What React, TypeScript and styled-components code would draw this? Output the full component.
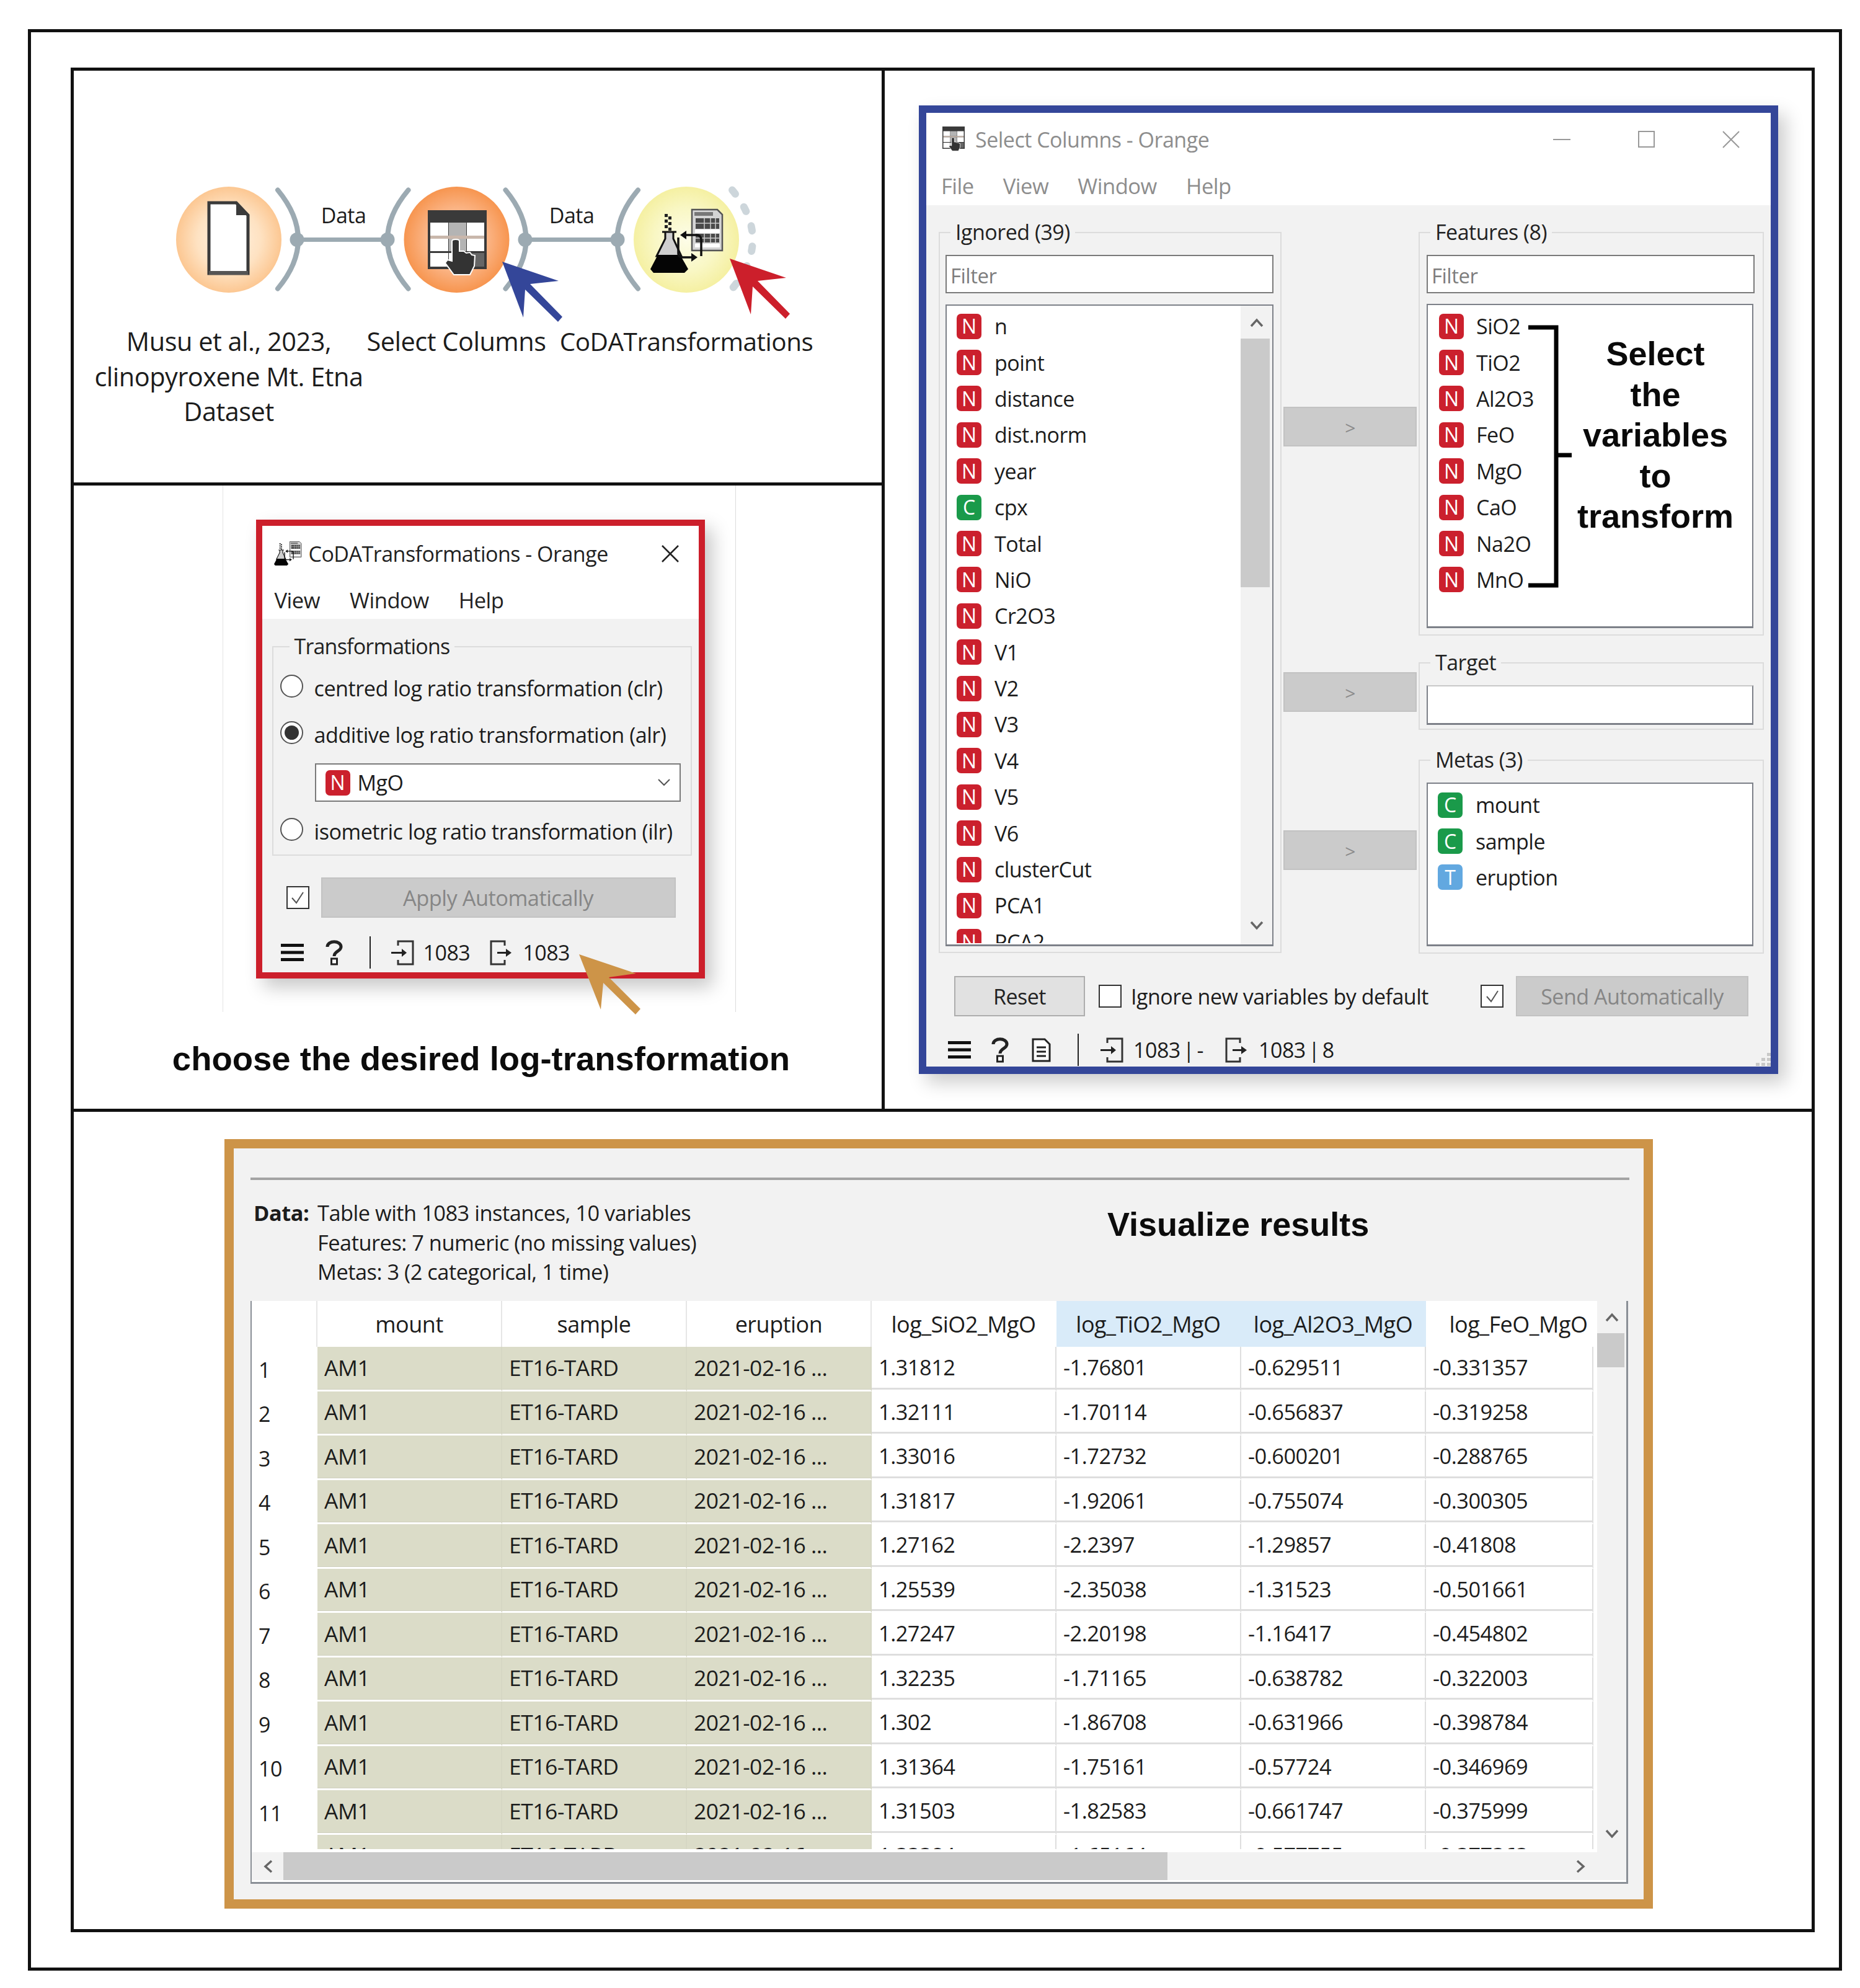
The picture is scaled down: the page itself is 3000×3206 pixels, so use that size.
import React from 'react';
import styled, { createGlobalStyle } from 'styled-components';

const UI = `"Open Sans", "Noto Sans", sans-serif`;
const BOLD = `"Liberation Sans", Arial, sans-serif`;

const Global = createGlobalStyle`
  html, body { margin: 0; padding: 0; background: #fff; }
  * { box-sizing: border-box; }
`;

const Page = styled.div`
  width: 3000px; height: 3206px; padding: 47px 0 0 45px; font-family: ${UI}; color: #1c1c1c;
  font-size: 34px; letter-spacing: -0.5px; position: relative;
`;
const OuterFrame = styled.div`
  width: 2926px; height: 3131px; border: 5px solid #111; padding: 57px 0 0 64px;
`;
const InnerFrame = styled.div`
  width: 2813px; height: 3007px; border: 5px solid #111;
  display: grid; grid-template-columns: 1308px 1495px; grid-template-rows: 1679px 1fr;
`;
const LeftColumn = styled.div`
  display: grid; grid-template-rows: 669px 1fr; border-right: 5px solid #111; border-bottom: 5px solid #111;
`;
const CanvasCell = styled.div`
  position: relative; border-bottom: 5px solid #111; overflow: hidden;
`;
const CanvasSvg = styled.svg`
  position: absolute; left: -1px; top: 0; width: 1304px; height: 664px;
`;
const NodeText = styled.div<{ $x: number; $y: number; $size?: number }>`
  position: absolute; left: ${p => p.$x}px; top: ${p => p.$y}px; transform: translate(-50%, -50%);
  white-space: nowrap; font-size: ${p => p.$size ?? 41.5}px; line-height: 57px; text-align: center;
  color: #1c1c1c;
`;

/* ---------- CoDA cell ---------- */
const CodaCell = styled.div`
  display: flex; flex-direction: column; align-items: center; padding-left: 4px;
`;
const ShotFrame = styled.div`
  width: 828px; height: 849px; padding: 55px 0 0 53px;
  border-left: 1px solid #e4e4e4; border-right: 1px solid #dcdcdc;
`;
const CodaWindow = styled.div`
  width: 724px; height: 740px; border: 10.5px solid #cc1f2b; background: #f2f2f2;
  box-shadow: 12px 14px 28px rgba(0,0,0,.22); display: flex; flex-direction: column;
`;
const Caption = styled.div`
  margin: 46px 0 0 7px; font: bold 54.5px/60px ${BOLD}; color: #0c0c0c; letter-spacing: 0;
`;

const TitleBar = styled.div<{ $h: number; $pad: number; $muted?: boolean }>`
  height: ${p => p.$h}px; background: #fff; display: flex; align-items: center;
  padding: 0 ${p => p.$pad}px 3px; gap: 12px; color: ${p => (p.$muted ? '#8d8d8d' : '#222')};
  font-size: 34px; flex: none;
`;
const MenuBar = styled.div<{ $h: number; $pad: number; $gap: number; $muted?: boolean }>`
  height: ${p => p.$h}px; background: #fff; display: flex; align-items: center;
  padding: 0 ${p => p.$pad}px 3px; gap: ${p => p.$gap}px; color: ${p => (p.$muted ? '#8d8d8d' : '#222')};
  font-size: 34.6px; flex: none;
`;
const WinButtons = styled.div<{ $gap: number; $right: number }>`
  margin-left: auto; display: flex; align-items: center; gap: ${p => p.$gap}px; padding-right: ${p => p.$right}px;
`;
const Group = styled.fieldset<{ $h: number; $pad?: number; $top?: number }>`
  margin: ${p => p.$top ?? 0}px 0 0; padding: 0 11px 9px ${p => p.$pad ?? 11}px; border: 2px solid #dcdcdc; min-width: 0;
  height: ${p => p.$h}px;
`;
const GroupLabel = styled.legend<{ $inset: number }>`
  margin-left: ${p => p.$inset}px; padding: 0 8px 2px; line-height: 42px; font-size: 34px; color: #222;
`;
const CodaLabel = styled(GroupLabel)`
  letter-spacing: -0.8px;
`;
const CodaBody = styled.div`
  flex: 1; padding: 23px 11px 0 16px; display: flex; flex-direction: column; min-height: 0;
`;
const RadioRow = styled.div<{ $top: number }>`
  height: 48px; margin-top: ${p => p.$top}px; display: flex; align-items: center; gap: 18px;
  white-space: nowrap; font-size: 34.2px;
`;
const Radio = styled.span<{ $on?: boolean }>`
  width: 37px; height: 37px; flex: none; border-radius: 50%; border: 2px solid #555; background: #fff;
  display: flex; align-items: center; justify-content: center; margin-top: -6px;
  &::after { content: ''; width: 23px; height: 23px; border-radius: 50%; background: ${p => (p.$on ? '#333' : 'transparent')}; }
`;
const ComboBox = styled.div`
  width: 590px; height: 62px; margin: 23px 0 0 56px; border: 2px solid #7a7a7a; background: #fff;
  display: flex; align-items: center; padding: 0 15px 0 15px; gap: 12px;
`;
const ComboArrow = styled.span`
  margin-left: auto; display: flex;
`;
const Badge = styled.span<{ $kind: 'N' | 'C' | 'T' }>`
  width: 40px; height: 41px; flex: none; border-radius: 7px; color: #fff; font-size: 32px; letter-spacing: 0;
  display: flex; align-items: center; justify-content: center; line-height: 1;
  background: ${p => ({ N: '#cb202d', C: '#1a9a4a', T: '#62a8e0' }[p.$kind])};
`;
const ApplyRow = styled.div`
  display: flex; align-items: center; gap: 19px; padding-left: 23px; margin-top: 35px; font-size: 34.4px;
`;
const Check = styled.span`
  width: 37px; height: 37px; flex: none; background: #fff; border: 2px solid #333;
  display: flex; align-items: center; justify-content: center;
`;
const FlatButton = styled.div<{ $w: number; $disabled?: boolean }>`
  width: ${p => p.$w}px; height: 65px; flex: none; display: flex; align-items: center; justify-content: center;
  background: ${p => (p.$disabled ? '#cbcbcb' : '#e1e1e1')}; color: ${p => (p.$disabled ? '#868686' : '#222')};
  border: 2px solid ${p => (p.$disabled ? '#c2c2c2' : '#adadad')};
`;
const StatusBar = styled.div<{ $top: number; $left: number }>`
  height: 52px; margin-top: ${p => p.$top}px; padding-left: ${p => p.$left}px;
  display: flex; align-items: center; flex: none; position: relative;
`;
const StatusCount = styled.span<{ $l: number }>`
  margin-left: ${p => p.$l}px; white-space: pre; word-spacing: -4px;
`;
const Separator = styled.span<{ $l: number }>`
  margin-left: ${p => p.$l}px; width: 2px; height: 52px; background: #222;
`;
const IconSlot = styled.svg<{ $l: number }>`
  margin-left: ${p => p.$l}px; flex: none; overflow: visible;
`;

/* ---------- Select Columns ---------- */
const SelectCell = styled.div`
  padding: 56px 0 0 55px; border-bottom: 5px solid #111;
`;
const SelectWindow = styled.div`
  width: 1386px; height: 1562px; border: 12px solid #344699; background: #f2f2f2;
  box-shadow: 12px 14px 28px rgba(0,0,0,.2); display: flex; flex-direction: column; position: relative;
`;
const SelectBody = styled.div`
  padding: 22px 11px 0 20px; display: grid; grid-template-columns: 553px 221px 557px; flex: none;
`;
const MoveColumn = styled.div`
  padding: 0 3px; display: flex; flex-direction: column;
`;
const MoveButton = styled.div<{ $top: number }>`
  height: 64px; margin-top: ${p => p.$top}px; background: #cbcbcb; border: 2px solid #c2c2c2; color: #8a8a8a;
  display: flex; align-items: center; justify-content: center; font-size: 30px; padding-top: 2px;
`;
const RightColumn = styled.div`
  display: flex; flex-direction: column;
`;
const FilterInput = styled.input<{ $w: number }>`
  display: block; width: ${p => p.$w}px; height: 62px; border: 2px solid #7a7a7a; background: #fff;
  padding: 4px 6px 0; margin: 14px 0 0; font: 33px ${UI}; letter-spacing: -0.5px; outline: none;
  &::placeholder { color: #7d7d7d; opacity: 1; }
`;
const VarList = styled.div<{ $h: number; $w: number; $top: number }>`
  width: ${p => p.$w}px; height: ${p => p.$h}px; margin-top: ${p => p.$top}px; background: #fff;
  border: 2px solid #7c8088; border-bottom-width: 3px; display: flex; position: relative; overflow: hidden; flex: none;
`;
const TargetBox = styled(VarList)`
  border-top-color: #c8c8c8;
`;
const VarRows = styled.div<{ $h?: number; $pad?: number; $top?: number }>`
  flex: 1; padding: ${p => p.$top ?? 4}px 0 0 ${p => p.$pad ?? 16}px; min-width: 0;
  ${p => (p.$h ? `height: ${p.$h}px; overflow: hidden;` : '')}
`;
const VarRow = styled.div<{ $gap?: number }>`
  height: 58.4px; display: flex; align-items: center; gap: ${p => p.$gap ?? 21}px; white-space: nowrap;
`;
const VScroll = styled.div<{ $w: number }>`
  width: ${p => p.$w}px; flex: none; background: #f2f2f2; display: flex; flex-direction: column;
`;
const ScrollArrow = styled.div<{ $h: number; $end?: number }>`
  height: ${p => p.$h}px; flex: none; display: flex; justify-content: center;
  align-items: ${p => (p.$end ? 'flex-end' : 'center')}; padding-bottom: ${p => p.$end ?? 0}px;
`;
const ScrollThumb = styled.div<{ $h: number; $w?: number }>`
  height: ${p => p.$h}px; width: ${p => (p.$w ? `${p.$w}px` : '100%')}; background: #cacaca; flex: none;
`;
const Bracket = styled.svg`
  position: absolute; left: 158px; top: 30px; width: 80px; height: 430px;
`;
const BracketNote = styled.div`
  position: absolute; left: 215px; top: 46px; width: 304px; text-align: center;
  font: bold 54px/65.5px ${BOLD}; color: #0a0a0a; letter-spacing: 0;
`;
const FooterRow = styled.div`
  margin-top: 36px; padding: 0 36px 0 45px; display: flex; align-items: center; flex: none;
`;
const IgnoreCheck = styled(Check)`
  margin-left: 22px;
`;
const IgnoreText = styled.span`
  margin-left: 15px; white-space: nowrap;
`;
const SendGroup = styled.div`
  margin-left: auto; display: flex; align-items: center; gap: 20px;
`;
const Grip = styled.svg`
  position: absolute; right: 0; bottom: 0; width: 26px; height: 24px;
`;

/* ---------- Table panel ---------- */
const TableCell = styled.div`
  grid-column: 1 / 3; padding: 44px 0 0 243px;
`;
const TablePanel = styled.div`
  width: 2304px; height: 1241px; border: 15px solid #cd9448; background: #f2f2f2;
`;
const Rule = styled.div`
  height: 4px; margin: 47px 23px 0 27px; background: #a3a3a3;
`;
const InfoRow = styled.div`
  display: flex; padding: 29px 0 0 32px; height: 195px; line-height: 47.5px; position: relative; font-size: 34.4px;
`;
const InfoKey = styled.div`
  width: 103px; font-weight: 700; flex: none;
`;
const InfoTitle = styled.div`
  position: absolute; left: 1409px; top: 41px; font: bold 54px/60px ${BOLD}; color: #0c0c0c; letter-spacing: 0; white-space: nowrap;
`;
const TableFrame = styled.div`
  margin-left: 27px; width: 2222px; height: 940px; border: 0 solid #8a8f96; border-width: 0 3px 3px 2px;
  display: flex; flex-direction: column; background: #fff;
`;
const TableTop = styled.div`
  display: flex; height: 889px; flex: none;
`;
const GridWrap = styled.div`
  width: 2170px; flex: none; padding-right: 6px; height: 889px;
`;
const GridClip = styled.div`
  height: 884px; overflow: hidden;
`;
const GridRow = styled.div<{ $h: number }>`
  display: grid; grid-template-columns: 106px repeat(6, 298px) 270px; height: ${p => p.$h}px;
`;
const HeadCell = styled.div<{ $sel?: boolean; $line?: boolean; $shift?: number }>`
  display: flex; align-items: center; justify-content: center; white-space: nowrap; font-size: 36px;
  padding-left: ${p => p.$shift ?? 0}px;
  background: ${p => (p.$sel ? '#d9ebf9' : '#fff')};
  border-right: 2px solid ${p => (p.$line ? '#e6e6e6' : 'transparent')};
`;
const IndexCell = styled.div`
  display: flex; align-items: center; padding: 2px 0 0 11px; background: #fff;
`;
const DataCell = styled.div<{ $meta?: boolean }>`
  display: flex; align-items: center; padding: 0 0 3px 11px; white-space: nowrap; overflow: hidden;
  font-size: ${p => (p.$meta ? 35.5 : 34.4)}px;
  background: ${p => (p.$meta ? '#dbdcc8' : '#fff')};
  border-right: 2px solid ${p => (p.$meta ? '#d6d7c4' : '#dedede')};
  border-bottom: 3.5px solid #fff;
  box-shadow: inset 0 -${p => (p.$meta ? 1 : 3)}px 0 ${p => (p.$meta ? '#cfd0be' : '#dedede')};
`;
const HScroll = styled.div`
  height: 45px; background: #f2f2f2; display: flex; flex: none;
`;
const HArrow = styled.div<{ $w: number; $auto?: boolean }>`
  width: ${p => p.$w}px; flex: none; display: flex; align-items: center; justify-content: center;
  ${p => (p.$auto ? 'margin-left: auto;' : '')}
`;
const GoldLayer = styled.svg`
  position: absolute; left: 934px; top: 1539px; width: 100px; height: 98px; overflow: visible;
`;

/* ---------- Drawings ---------- */
const TableIcon = ({ size, x, y }: { size: number; x?: number; y?: number }) => (
  <svg x={x} y={y} width={size} height={size * 110 / 95} viewBox="0 0 95 110" style={{ overflow: 'visible', flex: 'none' }}>
    <rect width="95" height="95" fill="#3a3a3a" />
    <rect x="4" y="20" width="29" height="21" fill="#fff" />
    <rect x="34" y="20" width="28" height="21" fill="#b4b4b4" />
    <rect x="63" y="20" width="28" height="21" fill="#fff" />
    <rect x="4" y="41" width="87" height="5" fill="#c9b7ab" />
    <rect x="4" y="46" width="29" height="20" fill="#fff" />
    <rect x="34" y="46" width="28" height="20" fill="#b4b4b4" />
    <rect x="63" y="46" width="28" height="20" fill="#fff" />
    <rect x="4" y="69" width="29" height="22" fill="#fff" />
    <rect x="34" y="69" width="28" height="22" fill="#fff" />
    <rect x="63" y="69" width="28" height="22" fill="#666" />
    <path d="M39 50 Q39 47 45 47 Q51 47 51 50 V66 L58 66 L62 69 L68 68 L71 72 L76 73 L75 90 L68 104 H42 L28 85 L32 80 L39 82 Z" fill="#333" stroke="#fff" strokeWidth="2" />
  </svg>
);
const FlaskIcon = ({ size, x, y }: { size: number; x?: number; y?: number }) => (
  <svg x={x} y={y} width={size} height={size * 103 / 116} viewBox="0 0 116 103" style={{ overflow: 'visible', flex: 'none' }}>
    <g fill="#222">
      <rect x="23" y="8" width="5" height="5" /><rect x="29" y="12" width="5" height="5" />
      <rect x="23" y="17" width="5" height="5" /><rect x="29" y="21" width="5" height="5" />
      <rect x="23" y="26" width="5" height="5" /><rect x="29" y="30" width="5" height="5" />
    </g>
    <path d="M19 37 H42 M24 37 V48 L10 76 H50 L37 48 V37" fill="#cfcfcf" stroke="#111" strokeWidth="3" />
    <path d="M12 74 H48 L61 97 L55 103 H5 L0 97 Z" fill="#050505" />
    <path d="M67 1 H108 L116 9 V67 H67 Z" fill="#d4d4d4" stroke="#555" strokeWidth="2.5" />
    <rect x="71" y="5" width="30" height="6" fill="#777" />
    <rect x="73" y="15" width="38" height="17" fill="#4a4a4a" />
    <rect x="73" y="40" width="38" height="14" fill="#4a4a4a" />
    <g stroke="#ccc" strokeWidth="1.5">
      <path d="M73 23 H111 M73 47 H111" />
      <path d="M87 15 V32 M97 15 V32 M105 15 V32 M87 40 V54 M97 40 V54 M105 40 V54" />
    </g>
    <rect x="72" y="33" width="40" height="6" fill="#fff" />
    <rect x="72" y="56" width="40" height="6" fill="#fff" />
    <path d="M82 76 V50 Q82 42 74 42 H56" fill="none" stroke="#111" strokeWidth="3.5" />
    <path d="M48 42 L58 35 V49 Z" fill="#111" />
    <path d="M45 46 V72 Q45 78 52 78 H68" fill="none" stroke="#111" strokeWidth="3.5" />
    <path d="M76 78 L66 71 V85 Z" fill="#111" />
  </svg>
);

const ArrowHead = ({ points, fill }: { points: [number, number][]; fill: string }) => (
  <polygon points={points.map(([a, b]) => `${a - 118},${b - 114}`).join(' ')} fill={fill} />
);

const Connector = ({ cx }: { cx: number }) => {
  const x = cx - 118;
  const y = 386.5 - 114;
  return <path d={`M${x + 79} ${y - 80} Q${x + 145} ${y} ${x + 79} ${y + 79}`} fill="none" stroke="#9caab2" strokeWidth="8" strokeLinecap="round" />;
};
const InputArc = ({ cx }: { cx: number }) => {
  const x = cx - 118;
  const y = 386.5 - 114;
  return <path d={`M${x - 78} ${y - 80} Q${x - 145} ${y} ${x - 78} ${y + 79}`} fill="none" stroke="#9caab2" strokeWidth="8" strokeLinecap="round" />;
};
const Link = ({ x1, x2 }: { x1: number; x2: number }) => {
  const y = 386.5 - 114;
  return (
    <g fill="#9caab2">
      <rect x={x1 - 118} y={y - 3.5} width={x2 - x1} height="7" />
      <circle cx={x1 - 118} cy={y} r="11.5" />
      <circle cx={x2 - 118} cy={y} r="11.5" />
    </g>
  );
};

const Chevron = ({ dir }: { dir: 'up' | 'down' | 'left' | 'right' }) => {
  const rot = { up: 0, down: 180, left: -90, right: 90 }[dir];
  return (
    <svg width="22" height="16" viewBox="0 0 22 16" style={{ transform: `rotate(${rot}deg)` }}>
      <polyline points="2,14 11,4 20,14" fill="none" stroke="#666" strokeWidth="3.5" />
    </svg>
  );
};
const CheckMark = () => (
  <svg width="24" height="22" viewBox="0 0 24 22"><polyline points="3,11 10,19 21,2" fill="none" stroke="#555" strokeWidth="2" /></svg>
);
const Hamburger = ({ l }: { l: number }) => (
  <IconSlot $l={l} width="37" height="28" viewBox="0 0 37 28"><path d="M0 2.5 H37 M0 14 H37 M0 25.5 H37" stroke="#111" strokeWidth="5" /></IconSlot>
);
const Help = ({ l }: { l: number }) => (
  <IconSlot $l={l} width="28" height="40" viewBox="0 0 28 40">
    <path d="M3 11 C3 0 25 0 25 11 C25 18 14 18 14 26" fill="none" stroke="#222" strokeWidth="5" />
    <rect x="9.5" y="30" width="9" height="9" fill="#fff" stroke="#222" strokeWidth="3" />
  </IconSlot>
);
const DocIcon = ({ l }: { l: number }) => (
  <IconSlot $l={l} width="31" height="39" viewBox="0 0 31 39">
    <path d="M2 2 H21 L29 10 V37 H2 Z" fill="#fff" stroke="#222" strokeWidth="3" />
    <path d="M8 15 H23 M8 22 H23 M8 29 H23" stroke="#222" strokeWidth="3" />
  </IconSlot>
);
const InIcon = ({ l }: { l: number }) => (
  <IconSlot $l={l} width="37" height="41" viewBox="0 0 37 41">
    <path d="M11 9 V2 H35 V39 H11 V32" fill="none" stroke="#333" strokeWidth="3" />
    <path d="M0 20.5 H20" stroke="#222" strokeWidth="3" />
    <path d="M25 20.5 L17 14 V27 Z" fill="#222" />
  </IconSlot>
);
const OutIcon = ({ l }: { l: number }) => (
  <IconSlot $l={l} width="35" height="41" viewBox="0 0 35 41">
    <path d="M24 9 V2 H2 V39 H24 V32" fill="none" stroke="#333" strokeWidth="3" />
    <path d="M12 20.5 H28" stroke="#222" strokeWidth="3" />
    <path d="M35 20.5 L26 14 V27 Z" fill="#222" />
  </IconSlot>
);
const CloseIcon = ({ color, size, w }: { color: string; size: number; w: number }) => (
  <svg width={size} height={size} viewBox="0 0 28 28"><path d="M1 1 L27 27 M27 1 L1 27" stroke={color} strokeWidth={w} /></svg>
);

const ignored: [string, 'N' | 'C'][] = [
  ['n', 'N'], ['point', 'N'], ['distance', 'N'], ['dist.norm', 'N'], ['year', 'N'], ['cpx', 'C'], ['Total', 'N'], ['NiO', 'N'],
  ['Cr2O3', 'N'], ['V1', 'N'], ['V2', 'N'], ['V3', 'N'], ['V4', 'N'], ['V5', 'N'], ['V6', 'N'], ['clusterCut', 'N'], ['PCA1', 'N'], ['PCA2', 'N'],
];
const features = ['SiO2', 'TiO2', 'Al2O3', 'FeO', 'MgO', 'CaO', 'Na2O', 'MnO'];
const metas: [string, 'C' | 'T'][] = [['mount', 'C'], ['sample', 'C'], ['eruption', 'T']];
const headers = ['mount', 'sample', 'eruption', 'log_SiO2_MgO', 'log_TiO2_MgO', 'log_Al2O3_MgO', 'log_FeO_MgO'];
const rows = [
  ['1.31812', '-1.76801', '-0.629511', '-0.331357'],
  ['1.32111', '-1.70114', '-0.656837', '-0.319258'],
  ['1.33016', '-1.72732', '-0.600201', '-0.288765'],
  ['1.31817', '-1.92061', '-0.755074', '-0.300305'],
  ['1.27162', '-2.2397', '-1.29857', '-0.41808'],
  ['1.25539', '-2.35038', '-1.31523', '-0.501661'],
  ['1.27247', '-2.20198', '-1.16417', '-0.454802'],
  ['1.32235', '-1.71165', '-0.638782', '-0.322003'],
  ['1.302', '-1.86708', '-0.631966', '-0.398784'],
  ['1.31364', '-1.75161', '-0.57724', '-0.346969'],
  ['1.31503', '-1.82583', '-0.661747', '-0.375999'],
  ['1.33384', '-1.65164', '-0.577755', '-0.377363'],
];

export default function App() {
  return (
    <Page>
      <Global />
      <OuterFrame>
        <InnerFrame>
          <LeftColumn>
            <CanvasCell>
              <CanvasSvg viewBox="0 0 1304 664">
                <defs>
                  <radialGradient id="g1"><stop offset="0" stopColor="#fff3e4" /><stop offset="0.6" stopColor="#fee2c2" /><stop offset="1" stopColor="#fcc792" /></radialGradient>
                  <radialGradient id="g2"><stop offset="0" stopColor="#fcc9a2" /><stop offset="0.55" stopColor="#fbb78a" /><stop offset="1" stopColor="#f7954f" /></radialGradient>
                  <radialGradient id="g3"><stop offset="0" stopColor="#fdfde8" /><stop offset="0.6" stopColor="#f9f7c4" /><stop offset="1" stopColor="#f5f0a2" /></radialGradient>
                </defs>
                <Connector cx={369} />
                <Link x1={479} x2={625} />
                <InputArc cx={736.5} />
                <Connector cx={736.5} />
                <Link x1={847} x2={996} />
                <InputArc cx={1107} />
                <path d="M1063 192.5 Q1129 272 1063 351.5" fill="none" stroke="#cdd6db" strokeWidth="12" strokeLinecap="round" strokeDasharray="8 25" />
                <ellipse cx={251} cy={272.5} rx="85" ry="85.5" fill="url(#g1)" />
                <ellipse cx={618.5} cy={272.5} rx="85" ry="85.5" fill="url(#g2)" />
                <ellipse cx={989} cy={272.5} rx="85" ry="85.5" fill="url(#g3)" />
                <path d="M219 213 H263 L282 233 V327 H219 Z" fill="#fff" stroke="#3a3a3a" strokeWidth="5" />
                <path d="M263 213 V233 H282 Z" fill="#3a3a3a" />
                <rect x="219" y="323" width="63" height="6" fill="#555" />
                <TableIcon size={95} x={572} y={225} />
                <FlaskIcon size={116} x={931} y={223} />
                <ArrowHead fill="#344699" points={[[810, 422], [901, 453], [855, 458], [907, 511], [900, 519], [847, 467], [844, 512]]} />
                <ArrowHead fill="#cc1f2b" points={[[1177, 417], [1268, 448], [1222, 453], [1274, 506], [1267, 514], [1214, 462], [1211, 507]]} />
              </CanvasSvg>
              <NodeText $x={435} $y={233} $size={34}>Data</NodeText>
              <NodeText $x={803} $y={233} $size={34}>Data</NodeText>
              <NodeText $x={250} $y={436}>Musu et al., 2023,</NodeText>
              <NodeText $x={250} $y={493}>clinopyroxene Mt. Etna</NodeText>
              <NodeText $x={250} $y={549}>Dataset</NodeText>
              <NodeText $x={617} $y={436}>Select Columns</NodeText>
              <NodeText $x={988} $y={436} $size={40.5}>CoDATransformations</NodeText>
            </CanvasCell>
            <CodaCell>
              <ShotFrame>
                <CodaWindow>
                  <TitleBar $h={92} $pad={19}>
                    <FlaskIcon size={44} />
                    <span>CoDATransformations - Orange</span>
                    <WinButtons $gap={0} $right={13}><CloseIcon color="#222" size={28} w={2.5} /></WinButtons>
                  </TitleBar>
                  <MenuBar $h={58} $pad={20} $gap={48}>
                    <span>View</span><span>Window</span><span>Help</span>
                  </MenuBar>
                  <CodaBody>
                    <Group $h={359}>
                      <CodaLabel $inset={15}>Transformations</CodaLabel>
                      <RadioRow $top={20}><Radio /><span>centred log ratio transformation (clr)</span></RadioRow>
                      <RadioRow $top={27}><Radio $on /><span>additive log ratio transformation (alr)</span></RadioRow>
                      <ComboBox>
                        <Badge $kind="N">N</Badge><span>MgO</span>
                        <ComboArrow><svg width="20" height="12" viewBox="0 0 20 12"><polyline points="1,1 10,10 19,1" fill="none" stroke="#555" strokeWidth="2" /></svg></ComboArrow>
                      </ComboBox>
                      <RadioRow $top={23}><Radio /><span>isometric log ratio transformation (ilr)</span></RadioRow>
                    </Group>
                    <ApplyRow>
                      <Check><CheckMark /></Check>
                      <FlatButton $w={572} $disabled>Apply Automatically</FlatButton>
                    </ApplyRow>
                    <StatusBar $top={30} $left={14}>
                      <Hamburger l={0} /><Help l={35} /><Separator $l={43} /><InIcon l={33} />
                      <StatusCount $l={15}>1083</StatusCount><OutIcon l={32} /><StatusCount $l={18}>1083</StatusCount>
                    </StatusBar>
                  </CodaBody>
                </CodaWindow>
              </ShotFrame>
              <Caption>choose the desired log-transformation</Caption>
            </CodaCell>
          </LeftColumn>

          <SelectCell>
            <SelectWindow>
              <TitleBar $h={88} $pad={26} $muted>
                <TableIcon size={36} />
                <span style={{ marginLeft: 5 }}>Select Columns - Orange</span>
                <WinButtons $gap={109} $right={24}>
                  <svg width="28" height="2" viewBox="0 0 28 2"><rect width="28" height="2" fill="#999" /></svg>
                  <svg width="27" height="27" viewBox="0 0 27 27"><rect x="1" y="1" width="25" height="25" fill="none" stroke="#999" strokeWidth="2" /></svg>
                  <CloseIcon color="#999" size={28} w={2} />
                </WinButtons>
              </TitleBar>
              <MenuBar $h={61} $pad={24} $gap={47} $muted>
                <span>File</span><span>View</span><span>Window</span><span>Help</span>
              </MenuBar>
              <SelectBody>
                <Group $h={1184} $pad={9}>
                  <GroupLabel $inset={8}>Ignored (39)</GroupLabel>
                  <FilterInput $w={529} placeholder="Filter" readOnly />
                  <VarList $w={529} $h={1035} $top={18}>
                    <VarRows $h={1028}>
                      {ignored.map(([t, k]) => (
                        <VarRow key={t}><Badge $kind={k}>{k}</Badge><span>{t}</span></VarRow>
                      ))}
                    </VarRows>
                    <VScroll $w={51}>
                      <ScrollArrow $h={53}><Chevron dir="up" /></ScrollArrow>
                      <ScrollThumb $h={401} $w={47} />
                      <ScrollArrow $h={574} $end={20}><Chevron dir="down" /></ScrollArrow>
                    </VScroll>
                  </VarList>
                </Group>
                <MoveColumn>
                  <MoveButton $top={303}>&gt;</MoveButton>
                  <MoveButton $top={364}>&gt;</MoveButton>
                  <MoveButton $top={191}>&gt;</MoveButton>
                </MoveColumn>
                <RightColumn>
                  <Group $h={672}>
                    <GroupLabel $inset={6}>Features (8)</GroupLabel>
                    <FilterInput $w={529} placeholder="Filter" readOnly />
                    <VarList $w={527} $h={523} $top={17}>
                      <VarRows $pad={18} $top={5}>
                        {features.map(t => (
                          <VarRow key={t} $gap={20}><Badge $kind="N">N</Badge><span>{t}</span></VarRow>
                        ))}
                      </VarRows>
                      <Bracket viewBox="0 0 80 430">
                        <path d="M4 6 H49 V422 H4 M49 212 H74" fill="none" stroke="#000" strokeWidth="7" />
                      </Bracket>
                      <BracketNote>Select<br />the<br />variables<br />to<br />transform</BracketNote>
                    </VarList>
                  </Group>
                  <Group $h={130} $top={22}>
                    <GroupLabel $inset={6}>Target</GroupLabel>
                    <TargetBox $w={527} $h={64} $top={14} />
                  </Group>
                  <Group $h={334} $top={27}>
                    <GroupLabel $inset={6}>Metas (3)</GroupLabel>
                    <VarList $w={527} $h={264} $top={14}>
                      <VarRows $top={5}>
                        {metas.map(([t, k]) => (
                          <VarRow key={t}><Badge $kind={k}>{k}</Badge><span>{t}</span></VarRow>
                        ))}
                      </VarRows>
                    </VarList>
                  </Group>
                </RightColumn>
              </SelectBody>
              <FooterRow>
                <FlatButton $w={211}>Reset</FlatButton>
                <IgnoreCheck />
                <IgnoreText>Ignore new variables by default</IgnoreText>
                <SendGroup>
                  <Check><CheckMark /></Check>
                  <FlatButton $w={375} $disabled>Send Automatically</FlatButton>
                </SendGroup>
              </FooterRow>
              <StatusBar $top={28} $left={35}>
                <Hamburger l={0} /><Help l={33} /><DocIcon l={37} /><Separator $l={43} /><InIcon l={35} />
                <StatusCount $l={16}>1083 | -</StatusCount><OutIcon l={35} /><StatusCount $l={19}>1083 | 8</StatusCount>
              </StatusBar>
              <Grip viewBox="0 0 26 24">
                <g fill="#c8c8c8">
                  <rect x="20" y="2" width="6" height="5" /><rect x="11" y="10" width="6" height="5" /><rect x="20" y="10" width="6" height="5" />
                  <rect x="2" y="18" width="6" height="5" /><rect x="11" y="18" width="6" height="5" /><rect x="20" y="18" width="6" height="5" />
                </g>
              </Grip>
            </SelectWindow>
          </SelectCell>

          <TableCell>
            <TablePanel>
              <Rule />
              <InfoRow>
                <InfoKey>Data:</InfoKey>
                <div>
                  <div>Table with 1083 instances, 10 variables</div>
                  <div>Features: 7 numeric (no missing values)</div>
                  <div>Metas: 3 (2 categorical, 1 time)</div>
                </div>
                <InfoTitle>Visualize results</InfoTitle>
              </InfoRow>
              <TableFrame>
                <TableTop>
                  <GridWrap>
                    <GridClip>
                      <GridRow $h={74}>
                        <HeadCell $line />
                        {headers.map((h, i) => (
                          <HeadCell key={h} $sel={i === 4 || i === 5} $line={i < 3} $shift={i === 6 ? 30 : 0}>{h}</HeadCell>
                        ))}
                      </GridRow>
                      {rows.map((r, i) => (
                        <GridRow key={i} $h={71.5}>
                          <IndexCell>{i + 1}</IndexCell>
                          <DataCell $meta>AM1</DataCell>
                          <DataCell $meta>ET16-TARD</DataCell>
                          <DataCell $meta>2021-02-16 ...</DataCell>
                          {r.map((v, j) => <DataCell key={j}>{v}</DataCell>)}
                        </GridRow>
                      ))}
                    </GridClip>
                  </GridWrap>
                  <VScroll $w={47}>
                    <ScrollArrow $h={52}><Chevron dir="up" /></ScrollArrow>
                    <ScrollThumb $h={55} $w={44} />
                    <ScrollArrow $h={782} $end={21}><Chevron dir="down" /></ScrollArrow>
                  </VScroll>
                </TableTop>
                <HScroll>
                  <HArrow $w={51}><Chevron dir="left" /></HArrow>
                  <ScrollThumb $h={45} $w={1426} />
                  <HArrow $w={146} $auto><Chevron dir="right" /></HArrow>
                </HScroll>
              </TableFrame>
            </TablePanel>
          </TableCell>
        </InnerFrame>
      </OuterFrame>
      <GoldLayer viewBox="934 1539 100 98">
        <polygon points="934,1539 1026,1570 982,1576 1033,1627 1025,1636 973,1585 969,1628" fill="#cd9448" />
      </GoldLayer>
    </Page>
  );
}
